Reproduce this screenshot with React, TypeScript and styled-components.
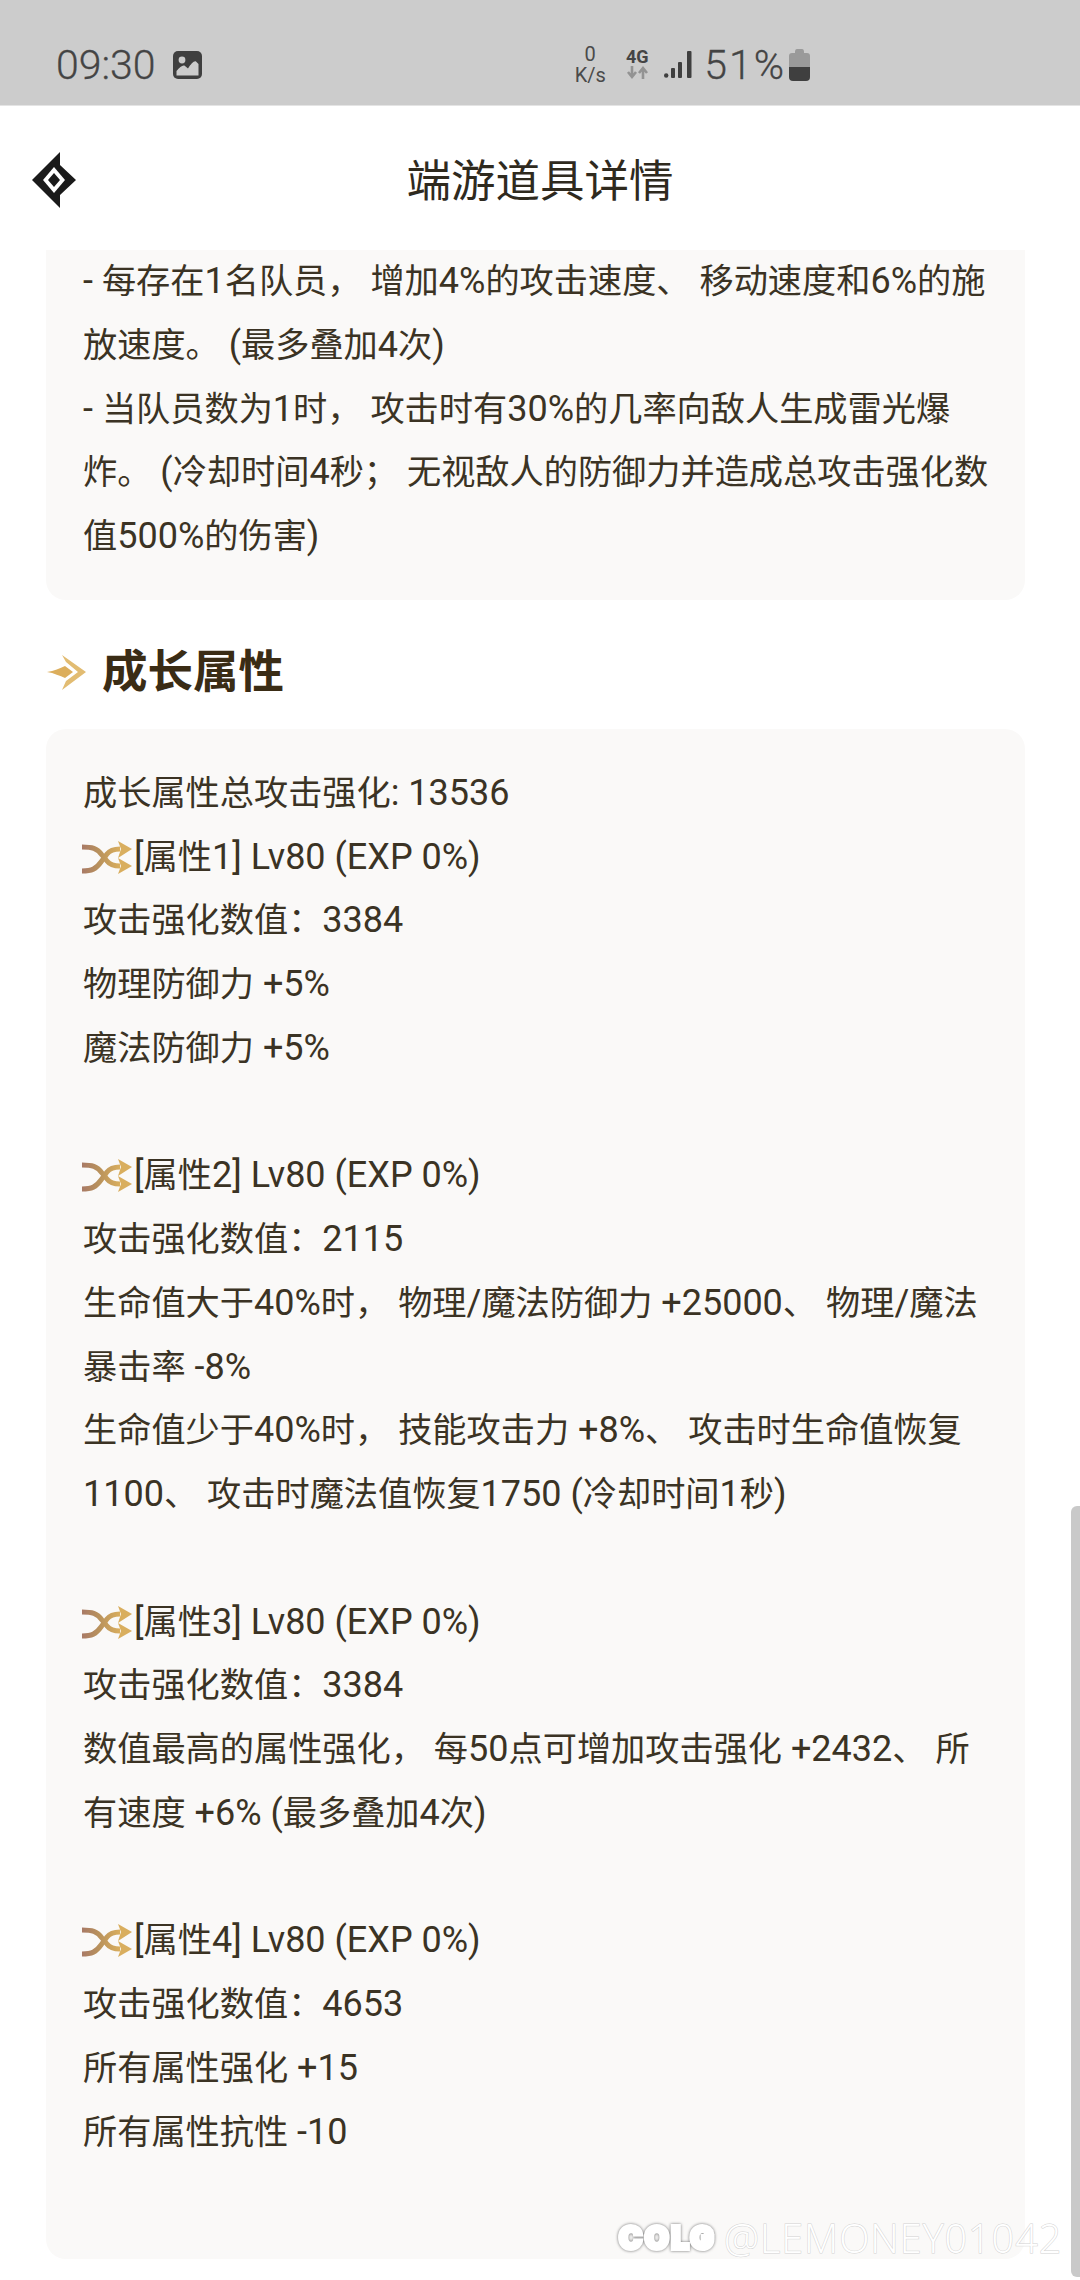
import React from "react";
import styled, { createGlobalStyle } from "styled-components";

const Global = createGlobalStyle`
  html, body { margin: 0; padding: 0; background: #fff; }
  #root { width: 1080px; height: 2280px; overflow: hidden; position: relative; }
`;

const Page = styled.div`
  width: 1080px;
  height: 2280px;
  position: relative;
  overflow: hidden;
  background: #fff;
  font-family: Roboto, "Noto Sans CJK SC", sans-serif;
  color: #3b3324;
`;

const StatusBar = styled.div`
  height: 106px;
  box-sizing: border-box;
  padding: 24px 270px 0 56px;
  background: #cccccc;
  display: flex;
  align-items: center;
  color: #444;
  border-bottom: 1px solid #e4e4e4;
`;

const StatusText = styled.span<{ $gap?: number; $spacing?: number }>`
  font-size: 41px;
  font-weight: 300;
  line-height: 40px;
  margin-left: ${(p) => p.$gap ?? 0}px;
  letter-spacing: ${(p) => p.$spacing ?? 0}px;
  -webkit-text-stroke: 0.3px #444;
`;

const StatusLeft = styled.div`
  display: flex;
  align-items: center;
  gap: 17px;
`;

const StatusRight = styled.div`
  margin-left: auto;
  display: flex;
  align-items: center;
`;

const NetSpeed = styled.div`
  width: 32px;
  display: flex;
  flex-direction: column;
  align-items: center;
  font-size: 20px;
  line-height: 21px;
  color: #4a4a4a;
`;

const NetType = styled.div`
  width: 26px;
  margin-left: 18px;
  display: flex;
  flex-direction: column;
  align-items: center;
  font-size: 18px;
  font-weight: 700;
  line-height: 16px;
  color: #444;
`;

const Header = styled.header`
  height: 144px;
  position: relative;
  display: flex;
  align-items: center;
  justify-content: center;
  background: #fff;
`;

const HeaderLogo = styled.svg`
  position: absolute;
  left: 30px;
  top: 45px;
`;

const Title = styled.h1`
  margin: 0;
  padding-top: 8px;
  font-size: 44.5px;
  line-height: 60px;
  font-weight: 400;
  color: #2f2a1e;
`;

const Card = styled.section<{ $clipped?: boolean }>`
  margin: 0 55px 0 46px;
  box-sizing: border-box;
  background: #faf9f8;
  border-radius: ${(p) => (p.$clipped ? "0 0 20px 20px" : "20px")};
  padding: ${(p) => (p.$clipped ? "0 36px 31px 37px" : "33px 36px 31px 37px")};
  font-size: 36px;
  line-height: 63.75px;
  color: #3b3324;
`;

const Cjk = styled.span`
  font-size: 34.2px;
  line-height: 1;
`;

const Latin = styled.span`
  line-height: 1;
`;

const Row = styled.div`
  min-height: 63.75px;
  white-space: pre;
`;

const SectionHead = styled.div`
  height: 129px;
  box-sizing: border-box;
  padding: 48px 0 0 46px;
  display: flex;
  align-items: flex-start;
  gap: 16px;
`;

const SectionTitle = styled.h2`
  margin: 0;
  font-size: 45.5px;
  line-height: 50px;
  font-weight: 700;
  color: #3a2c15;
`;

const ArrowMark = styled.svg`
  margin-top: 5px;
  flex: none;
`;

const ShuffleMark = styled.svg`
  vertical-align: 5px;
  margin: -10px 2px -10px -1px;
`;

const ScrollThumb = styled.div`
  position: absolute;
  left: 1071px;
  top: 1506px;
  width: 9px;
  height: 771px;
  background: #c9c9c9;
  border-radius: 6px 0 0 6px;
`;

const Watermark = styled.div`
  position: absolute;
  left: 616px;
  top: 2214px;
  display: flex;
  align-items: center;
  gap: 5px;
  white-space: nowrap;
`;

const WatermarkLogo = styled.span`
  width: 103px;
  font-family: Inter, sans-serif;
  font-size: 31px;
  line-height: 48px;
  font-weight: 900;
  letter-spacing: 2.5px;
  padding-left: 3px;
  box-sizing: border-box;
  color: #fff;
  -webkit-text-stroke: 4px #fff;
  filter: drop-shadow(0 0 1.5px #6f6f6f);
`;

const WatermarkName = styled.span`
  font-family: "Open Sans", sans-serif;
  font-size: 39.5px;
  line-height: 48px;
  font-weight: 300;
  letter-spacing: 1px;
  color: #fff;
  -webkit-text-stroke: 1px #d2d2d2;
  paint-order: stroke fill;
`;

const CJK_RUN = /([\u3000-\u303f\u4e00-\u9fff\uff00-\uffef]+)/;

const Mixed = ({ text }: { text: string }) => (
  <>
    {text.split(CJK_RUN).map((part, i) =>
      i % 2 === 1 ? <Cjk key={i}>{part}</Cjk> : part ? <Latin key={i}>{part}</Latin> : null
    )}
  </>
);

const Line = ({ text }: { text?: string }) => <Row>{text ? <Mixed text={text} /> : null}</Row>;

const ImageIcon = () => (
  <svg width="29" height="28" viewBox="0 0 29 28">
    <rect width="29" height="28" rx="5" fill="#3f3f3f" />
    <circle cx="9" cy="9" r="3.4" fill="#ccc" />
    <path d="M3.5 24.5 V20 C7 16 10 13.5 12 15 L15 17.5 C18 13 21 9.5 23 10.5 L25.5 13 V24.5 Z" fill="#ccc" />
  </svg>
);

const Arrows = () => (
  <svg width="24" height="15" viewBox="0 0 24 15">
    <path d="M7 1v9M3 7l4 5 4-5" stroke="#939393" strokeWidth="2.6" fill="none" />
    <path d="M18 14V4M14 8l4-5 4 5" stroke="#939393" strokeWidth="2.6" fill="none" />
  </svg>
);

const Signal = () => (
  <svg width="28" height="27" viewBox="0 0 28 27" style={{ marginLeft: 14 }}>
    <circle cx="2.2" cy="24.5" r="2.2" fill="#3f3f3f" />
    <rect x="7" y="17" width="4" height="10" rx="1" fill="#3f3f3f" />
    <rect x="14" y="11" width="4" height="16" rx="1" fill="#3f3f3f" />
    <rect x="23" y="0" width="4.5" height="27" rx="1" fill="#3f3f3f" />
  </svg>
);

const Battery = () => (
  <svg width="21" height="32" viewBox="0 0 21 32" style={{ marginLeft: 3 }}>
    <path d="M6 3 Q6 0 8 0 H13 Q15 0 15 3 V4 H18 Q21 4 21 7 V18 H0 V7 Q0 4 3 4 H6 Z" fill="#9a9a9a" />
    <path d="M0 18 H21 V28 Q21 32 17 32 H4 Q0 32 0 28 Z" fill="#3f3f3f" />
  </svg>
);

const Shuffle = () => (
  <ShuffleMark width="50" height="33" viewBox="0 0 50 33">
    <defs>
      <linearGradient id="sg" x1="0" x2="1" y1="0" y2="0">
        <stop offset="0" stopColor="#a87a66" />
        <stop offset="0.45" stopColor="#b9925c" />
        <stop offset="1" stopColor="#d9ae5e" />
      </linearGradient>
    </defs>
    <path d="M0 6 C10 6 15 7 20 14 L25 20 C28 24 32 25 38 25" fill="none" stroke="url(#sg)" strokeWidth="5" />
    <path d="M0 30 C10 30 14 28 19 21 L25 13 C28 9 32 8 38 8" fill="none" stroke="url(#sg)" strokeWidth="5" />
    <path d="M36 0 L50 8 L36 17 L39 8 Z" fill="#d9ae5e" />
    <path d="M36 17 L50 25 L36 33 L39 25 Z" fill="#d9ae5e" />
  </ShuffleMark>
);

const Attr = ({ n }: { n: number }) => (
  <Row>
    <Shuffle />
    <Mixed text={`[属性${n}] Lv80 (EXP 0%)`} />
  </Row>
);

export default function App() {
  return (
    <Page>
      <Global />
      <StatusBar>
        <StatusLeft>
          <StatusText>09:30</StatusText>
          <ImageIcon />
        </StatusLeft>
        <StatusRight>
          <NetSpeed>
            <span>0</span>
            <span>K/s</span>
          </NetSpeed>
          <NetType>
            <span>4G</span>
            <Arrows />
          </NetType>
          <Signal />
          <StatusText $gap={12} $spacing={2}>51%</StatusText>
          <Battery />
        </StatusRight>
      </StatusBar>
      <Header>
        <HeaderLogo width="47" height="58" viewBox="0 0 47 58">
          <path d="M30 1 V14 L46 29 L30 44 V57 L2 29 Z" fill="#1a1a1a" />
          <path d="M24 16 L35 29 L24 42 L13 29 Z" fill="#fff" />
          <path d="M24 22 L30 29 L24 36 L18 29 Z" fill="#1a1a1a" />
        </HeaderLogo>
        <Title>端游道具详情</Title>
      </Header>
      <Card $clipped>
        <Line text="- 每存在1名队员， 增加4%的攻击速度、 移动速度和6%的施" />
        <Line text="放速度。 (最多叠加4次)" />
        <Line text="- 当队员数为1时， 攻击时有30%的几率向敌人生成雷光爆" />
        <Line text="炸。 (冷却时间4秒； 无视敌人的防御力并造成总攻击强化数" />
        <Line text="值500%的伤害)" />
      </Card>
      <SectionHead>
        <ArrowMark width="40" height="38" viewBox="0 0 40 38">
          <path d="M16 2 L40 19 L16 37 L20 28 L32 19 L20 9 Z" fill="#e2bc72" />
          <path d="M1 19 C8 18 14 15 19 13 L27 19 L19 25 C14 23 8 20 1 19 Z" fill="#dcae5c" />
        </ArrowMark>
        <SectionTitle>成长属性</SectionTitle>
      </SectionHead>
      <Card>
        <Line text="成长属性总攻击强化: 13536" />
        <Attr n={1} />
        <Line text="攻击强化数值：3384" />
        <Line text="物理防御力 +5%" />
        <Line text="魔法防御力 +5%" />
        <Line />
        <Attr n={2} />
        <Line text="攻击强化数值：2115" />
        <Line text="生命值大于40%时， 物理/魔法防御力 +25000、 物理/魔法" />
        <Line text="暴击率 -8%" />
        <Line text="生命值少于40%时， 技能攻击力 +8%、 攻击时生命值恢复" />
        <Line text="1100、 攻击时魔法值恢复1750 (冷却时间1秒)" />
        <Line />
        <Attr n={3} />
        <Line text="攻击强化数值：3384" />
        <Line text="数值最高的属性强化， 每50点可增加攻击强化 +2432、 所" />
        <Line text="有速度 +6% (最多叠加4次)" />
        <Line />
        <Attr n={4} />
        <Line text="攻击强化数值：4653" />
        <Line text="所有属性强化 +15" />
        <Line text="所有属性抗性 -10" />
        <Line />
      </Card>
      <ScrollThumb />
      <Watermark>
        <WatermarkLogo>COLG</WatermarkLogo>
        <WatermarkName>@LEMONEY01042</WatermarkName>
      </Watermark>
    </Page>
  );
}
